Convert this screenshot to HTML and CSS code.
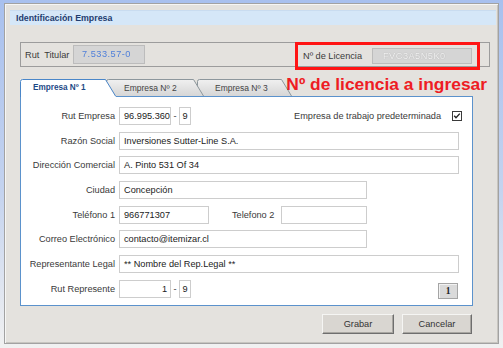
FILE: index.html
```html
<!DOCTYPE html>
<html lang="es">
<head>
  <meta charset="UTF-8" />
  <meta name="viewport" content="width=device-width, initial-scale=1.0" />
  <title>Identificación Empresa</title>
  <link rel="stylesheet" href="styles.css">
</head>
<body>
  <div class="dialog">
    <div class="titlebar">Identificación Empresa</div>

    <div class="body">
      <div class="titular">
        <span class="titular-label">Rut&nbsp; Titular</span>
        <span class="field disabled rut-titular"><span class="masked">7.533.57-0</span></span>
        <div class="licencia">
          <span>Nº de Licencia</span>
          <span class="field disabled licencia-field"><span class="masked light">FVC3A5N5K0</span></span>
        </div>
      </div>

      <div class="annotation">Nº de licencia a ingresar</div>

      <div class="tabs">
        <svg class="tab-shapes" width="453" height="18" viewBox="0 0 453 18">
          <defs>
            <linearGradient id="off" x1="0" y1="0" x2="0" y2="1">
              <stop offset="0" stop-color="#f0f0f0"/>
              <stop offset="1" stop-color="#d6d6d6"/>
            </linearGradient>
          </defs>
          <path d="M177.5 17 V2.5 Q177.5 0.5 179.5 0.5 H261.5 L271.5 17" fill="url(#off)" stroke="#8d979c"/>
          <path d="M86.5 17 V2.5 Q86.5 0.5 88.5 0.5 H173.5 L183.5 17" fill="url(#off)" stroke="#8d979c"/>
          <path d="M0 18 V2 Q0 0 2 0 H85 L96 18 Z" fill="#ffffff"/>
          <path d="M0.5 18 V2.5 Q0.5 0.5 2.5 0.5 H85.5 L95.5 17" fill="none" stroke="#4a86c8"/>
        </svg>
        <span class="tab active">Empresa Nº 1</span>
        <span class="tab">Empresa Nº 2</span>
        <span class="tab">Empresa Nº 3</span>
      </div>

      <div class="panel">
        <div class="row">
          <label>Rut Empresa</label>
          <span class="field rut">96.995.360</span>
          <span class="dash">-</span>
          <span class="field dv">9</span>
          <span class="check-label">Empresa de trabajo predeterminada</span>
          <svg class="check" width="10" height="10" viewBox="0 0 10 10">
            <rect x="0.5" y="0.5" width="9" height="9" fill="#fff" stroke="#3a3a3a"/>
            <path d="M2.2 4.8 L4 6.8 L7.8 2.6" fill="none" stroke="#222" stroke-width="1.4"/>
          </svg>
        </div>
        <div class="row">
          <label>Razón Social</label>
          <span class="field wide">Inversiones Sutter-Line S.A.</span>
        </div>
        <div class="row">
          <label>Dirección Comercial</label>
          <span class="field wide">A. Pinto 531 Of 34</span>
        </div>
        <div class="row">
          <label>Ciudad</label>
          <span class="field medium">Concepción</span>
        </div>
        <div class="row">
          <label>Teléfono 1</label>
          <span class="field tel">966771307</span>
          <span class="tel2-label">Telefono 2</span>
          <span class="field tel2"></span>
        </div>
        <div class="row">
          <label>Correo Electrónico</label>
          <span class="field medium">contacto@itemizar.cl</span>
        </div>
        <div class="row">
          <label>Representante Legal</label>
          <span class="field wide">** Nombre del Rep.Legal **</span>
        </div>
        <div class="row">
          <label>Rut Represente</label>
          <span class="field rut right">1</span>
          <span class="dash">-</span>
          <span class="field dv">9</span>
          <button class="page-btn">1</button>
        </div>
      </div>

      <div class="footer">
        <button class="btn">Grabar</button>
        <button class="btn">Cancelar</button>
      </div>
    </div>
  </div>
</body>
</html>
```

FILE: styles.css
```css
html, body {
  margin: 0;
  height: 348px;
}

body {
  font-family: 'Liberation Sans', Arial, sans-serif;
  font-size: 9.2px;
  color: #3a3a3a;
  background: linear-gradient(to bottom, #a8c0ee 0%, #c4d3ef 55%, #f1f1f1 100%);
  overflow: hidden;
}

.dialog {
  box-sizing: border-box;
  margin: 3px 0 0 4px;
  width: 495px;
  height: 341px;
  background-color: #e4e2de;
  border: 1px solid #a2a2a2;
  box-shadow: inset 1px 1px 0 #f6f6f5, inset -1px -1px 0 #c7c5c0;
  padding: 6px 2px 0 5px;
}

.titlebar {
  height: 15px;
  line-height: 15px;
  background-color: #d5e7f8;
  border-top: 1px solid #c9dcf0;
  box-sizing: border-box;
  padding-left: 6px;
  font-weight: bold;
  font-size: 8.8px;
  color: #1f3d70;
}

.body {
  position: relative;
  padding: 17px 6px 0 10px;
}

.titular {
  box-sizing: border-box;
  height: 25px;
  border: 1px solid #9c9c9c;
  display: flex;
  align-items: center;
  padding-left: 4px;
}

.titular-label {
  width: 48px;
}

.field {
  box-sizing: border-box;
  display: inline-block;
  height: 18px;
  line-height: 16px;
  background-color: #fff;
  border: 1px solid #cdcdcd;
  padding: 0 4px;
  color: #222;
  white-space: nowrap;
  overflow: hidden;
}

.field.disabled {
  background-color: #d5d5d5;
  border-color: #bcbcbc;
}

.rut-titular {
  width: 72px;
  height: 19px;
  line-height: 17px;
  padding-left: 8px;
}

.masked {
  color: #4f7fd9;
  filter: blur(0.4px);
  letter-spacing: 0.5px;
}

.masked.light {
  color: #f5f5f5;
  text-shadow: 0 0 1px #999;
}

.licencia {
  box-sizing: border-box;
  align-self: flex-start;
  margin: -1px 9px 0 auto;
  width: 185px;
  height: 28px;
  border: 3px solid #ff1414;
  display: flex;
  align-items: center;
  justify-content: space-between;
  padding: 0 5px;
}

.licencia-field {
  width: 100px;
  height: 16px;
  line-height: 14px;
  padding-left: 10px;
}

.annotation {
  position: absolute;
  top: 49px;
  right: 9px;
  font-size: 17.4px;
  line-height: 20px;
  font-weight: bold;
  color: #ee1c24;
  z-index: 3;
}

.tabs {
  position: relative;
  margin-top: 12px;
  height: 17px;
  display: flex;
  padding-left: 13px;
}

.tab-shapes {
  position: absolute;
  left: 0;
  top: 0;
  z-index: 1;
}

.tab {
  position: relative;
  z-index: 2;
  width: 91px;
  line-height: 18px;
  font-size: 8.5px;
  color: #444;
}

.tab.active {
  font-weight: bold;
  font-size: 8.2px;
  color: #1e4a86;
}

.panel {
  box-sizing: border-box;
  width: 453px;
  height: 210px;
  background-color: #fff;
  border: 1px solid #5b92cc;
  padding-top: 10px;
  display: flex;
  flex-direction: column;
  gap: 6.7px;
}

.row {
  display: flex;
  align-items: center;
  height: 18px;
}

.row label {
  width: 94px;
  text-align: right;
  margin-right: 4px;
}

.rut { width: 52px; }
.right { text-align: right; padding-right: 3px; }
.dv { width: 12px; padding: 0 2px; text-align: center; }
.wide { width: 340px; }
.medium { width: 248px; }
.tel { width: 90px; }
.tel2 { width: 86px; }

.dash {
  width: 8px;
  text-align: center;
}

.tel2-label {
  margin-left: 23px;
  width: 49px;
}

.check-label {
  margin-left: 103px;
}

.check {
  margin-left: 11px;
}

.page-btn {
  box-sizing: border-box;
  margin: 4px 0 0 247px;
  width: 20px;
  height: 16px;
  padding: 0;
  font-family: 'Liberation Serif', serif;
  font-weight: bold;
  font-size: 9.5px;
  color: #222;
  background-color: #dadada;
  border: 1px solid #a5a5a5;
  box-shadow: inset 1px 1px 0 #f2f2f2;
}

.footer {
  display: flex;
  justify-content: flex-end;
  gap: 8px;
  margin-top: 8px;
  padding-right: 18px;
}

.btn {
  box-sizing: border-box;
  height: 20px;
  width: 72px;
  padding: 0;
  font-family: 'Liberation Sans', Arial, sans-serif;
  font-size: 9.2px;
  color: #333;
  background-color: #d9d6d1;
  border: 1px solid;
  border-color: #f5f5f3 #6e6e6e #6e6e6e #f5f5f3;
  box-shadow: inset -1px -1px 0 #a8a6a1;
}

.btn + .btn {
  width: 70px;
}
```
